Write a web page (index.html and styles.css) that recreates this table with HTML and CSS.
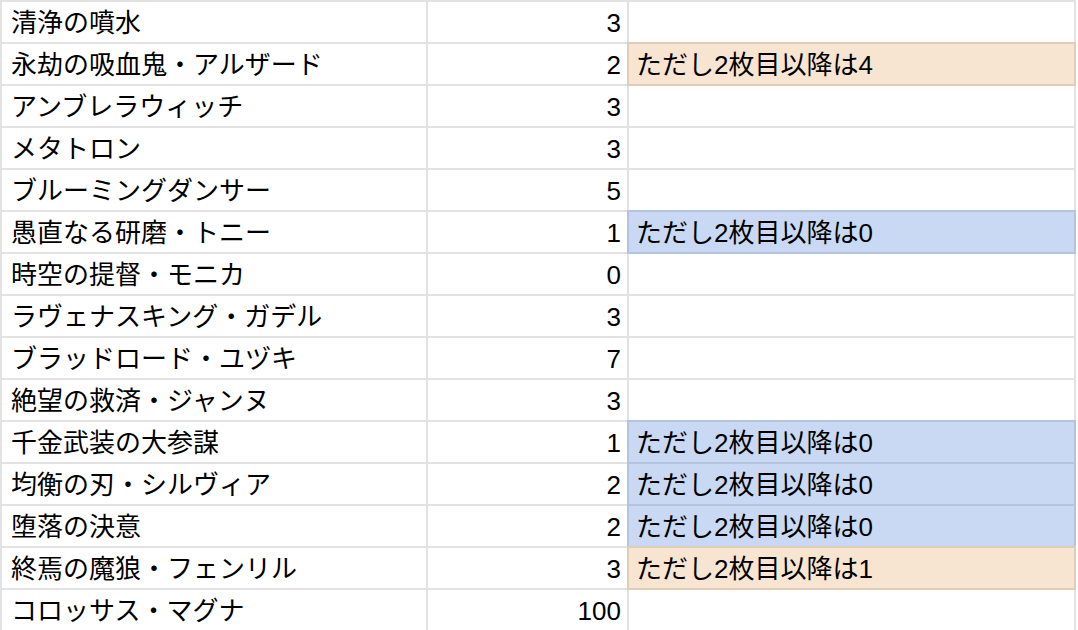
FILE: index.html
```html
<!DOCTYPE html>
<html>
    <head>
        <title>カード一覧</title>
        <link rel="stylesheet" href="styles.css">
    </head>
    <body>
        <div class="sheet">
            <div class="cell name">清浄の噴水</div>
            <div class="cell num">3</div>
            <div class="cell note"></div>

            <div class="cell name">永劫の吸血鬼・アルザード</div>
            <div class="cell num">2</div>
            <div class="cell note peach">ただし2枚目以降は4</div>

            <div class="cell name">アンブレラウィッチ</div>
            <div class="cell num">3</div>
            <div class="cell note"></div>

            <div class="cell name">メタトロン</div>
            <div class="cell num">3</div>
            <div class="cell note"></div>

            <div class="cell name">ブルーミングダンサー</div>
            <div class="cell num">5</div>
            <div class="cell note"></div>

            <div class="cell name">愚直なる研磨・トニー</div>
            <div class="cell num">1</div>
            <div class="cell note blue">ただし2枚目以降は0</div>

            <div class="cell name">時空の提督・モニカ</div>
            <div class="cell num">0</div>
            <div class="cell note"></div>

            <div class="cell name">ラヴェナスキング・ガデル</div>
            <div class="cell num">3</div>
            <div class="cell note"></div>

            <div class="cell name">ブラッドロード・ユヅキ</div>
            <div class="cell num">7</div>
            <div class="cell note"></div>

            <div class="cell name">絶望の救済・ジャンヌ</div>
            <div class="cell num">3</div>
            <div class="cell note"></div>

            <div class="cell name">千金武装の大参謀</div>
            <div class="cell num">1</div>
            <div class="cell note blue">ただし2枚目以降は0</div>

            <div class="cell name">均衡の刃・シルヴィア</div>
            <div class="cell num">2</div>
            <div class="cell note blue">ただし2枚目以降は0</div>

            <div class="cell name">堕落の決意</div>
            <div class="cell num">2</div>
            <div class="cell note blue">ただし2枚目以降は0</div>

            <div class="cell name">終焉の魔狼・フェンリル</div>
            <div class="cell num">3</div>
            <div class="cell note peach">ただし2枚目以降は1</div>

            <div class="cell name">コロッサス・マグナ</div>
            <div class="cell num">100</div>
            <div class="cell note"></div>
        </div>
    </body>
</html>
```

FILE: styles.css
```css
body {
    margin: 0;
    background-color: white;
    color: black;
    font-family: "Liberation Sans", "Noto Sans CJK JP", sans-serif;
    overflow: hidden;
}

.sheet {
    display: grid;
    grid-template-columns: 424px 199px 445px;
    grid-auto-rows: 40px;
    gap: 2px;
    padding: 2px;
    width: fit-content;
    background-color: #e2e2e2;
}

.cell {
    background-color: white;
    font-size: 26px;
    line-height: 40px;
    white-space: nowrap;
    overflow: hidden;
}
.name {
    padding-left: 9px;
    padding-top: 1px;
}
.num {
    text-align: right;
    padding-right: 6px;
    padding-top: 1px;
}
.note {
    padding-left: 7px;
    padding-top: 1px;
}
.peach {
    background-color: #f7e5d2;
    box-shadow: 0 0 0 2px #dfcdb5;
}
.blue {
    background-color: #c9d9f3;
    box-shadow: 0 0 0 2px #b5c4dd;
}
```
